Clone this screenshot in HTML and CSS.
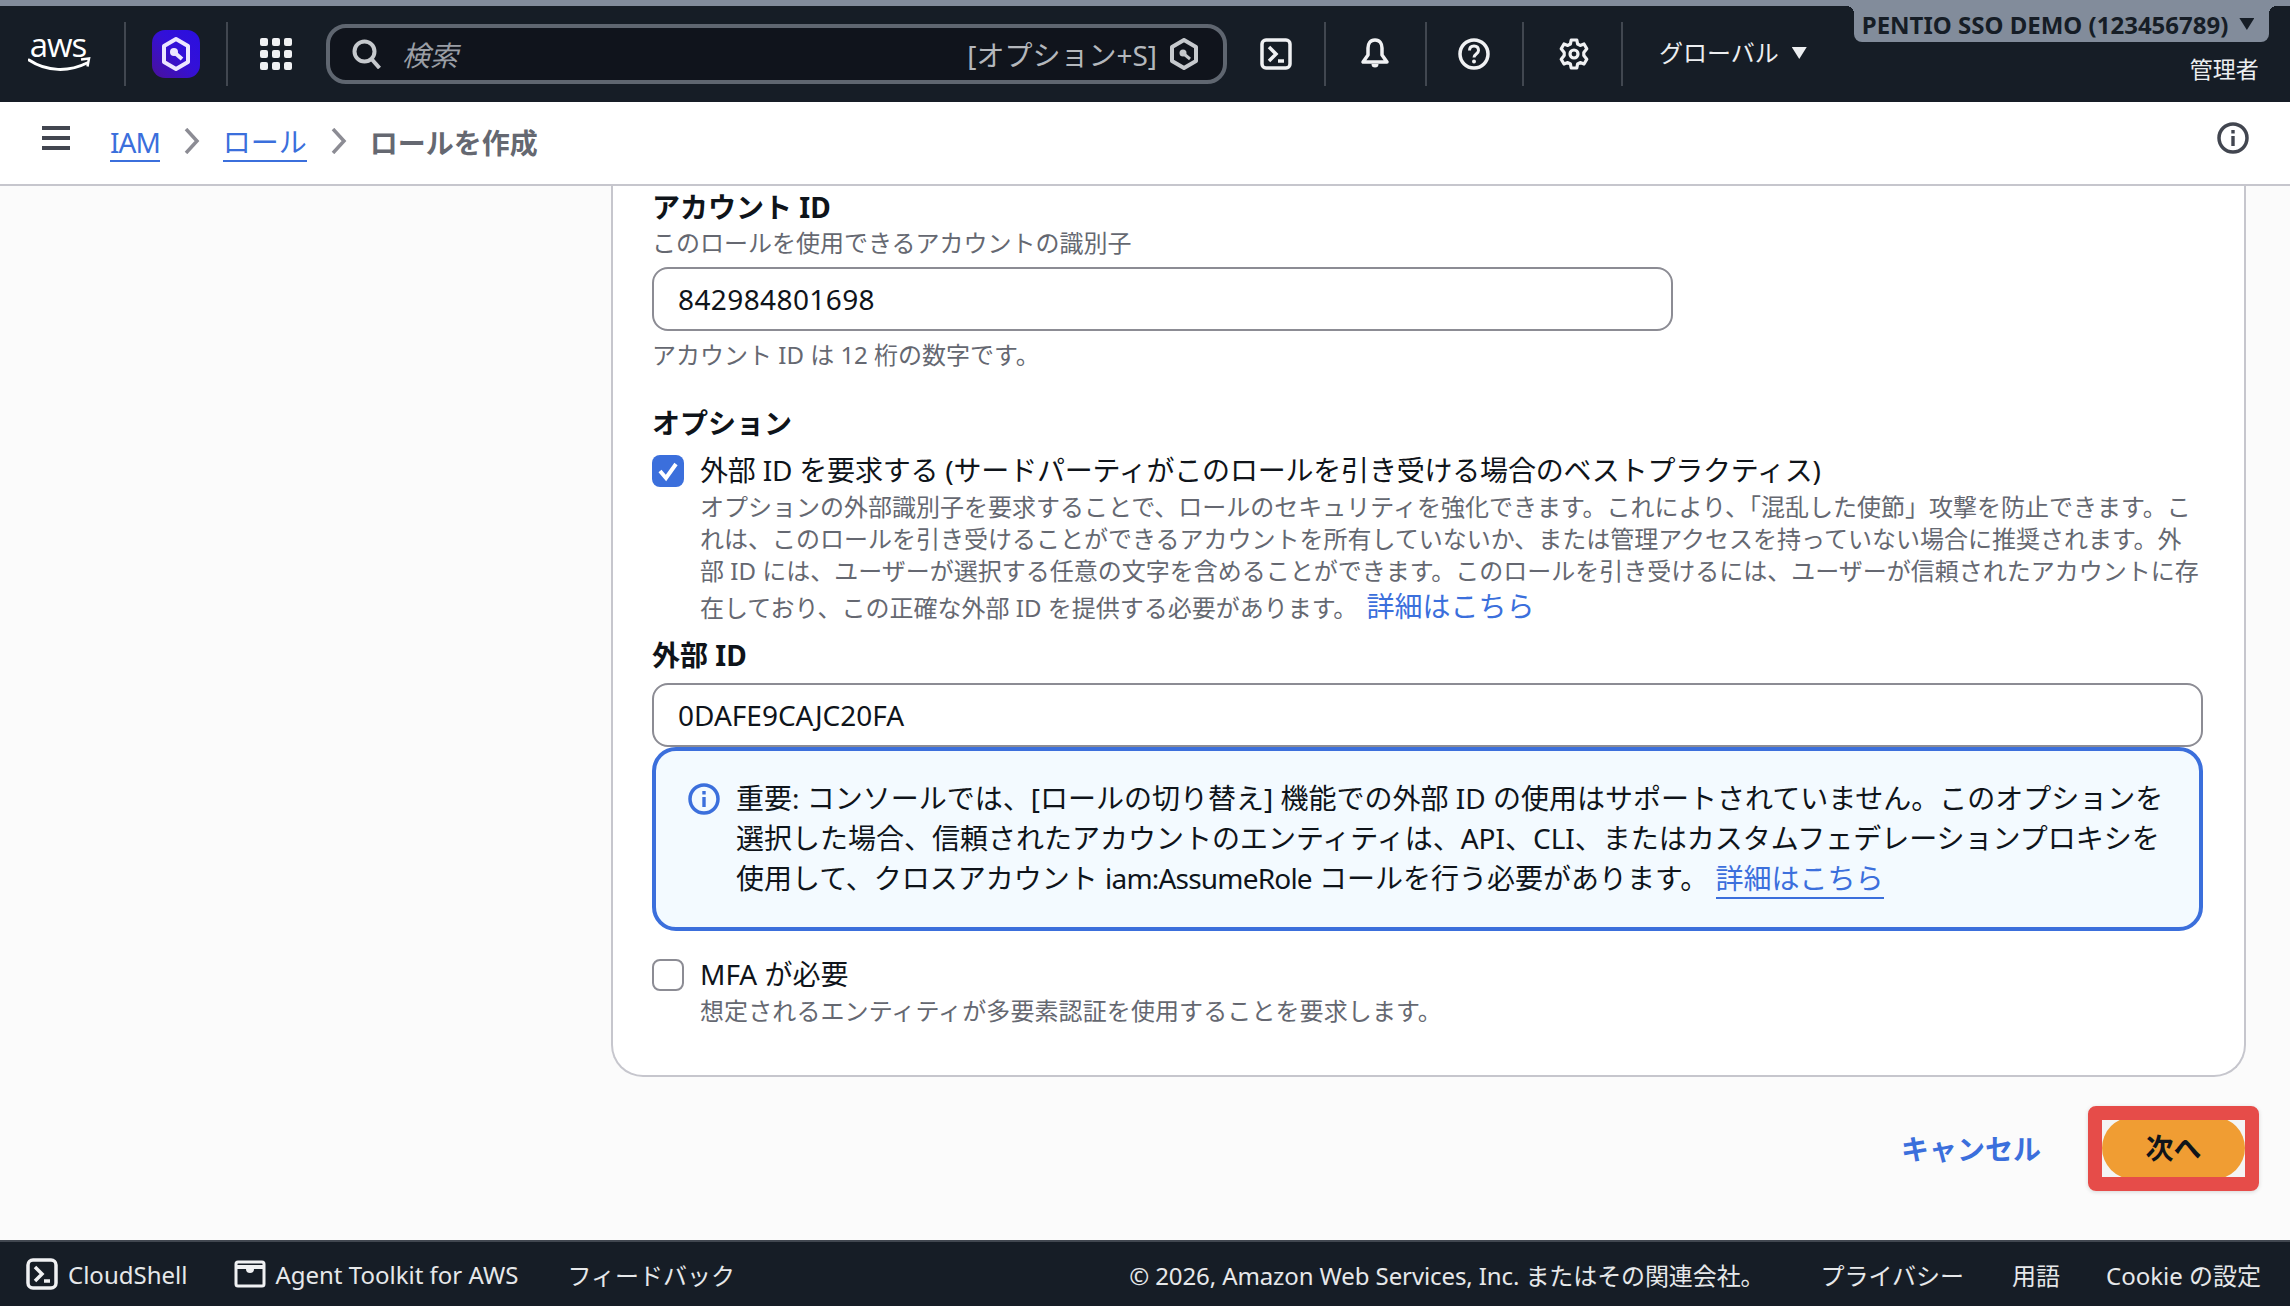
FILE: index.html
```html
<!DOCTYPE html>
<html lang="ja">
<head>
<meta charset="utf-8">
<title>ロールを作成</title>
<link rel="stylesheet" href="styles.css">
</head>
<body>
<div class="strip"></div>
<header class="topbar">
  <svg class="aws" viewBox="0 -12 63 50" width="63" height="50" aria-label="aws"><text x="30" y="22" text-anchor="middle" class="aws-text">aws</text><path d="M1 25c18 12 40 12 58 3" fill="none" stroke="#fff" stroke-width="3" stroke-linecap="round"/><path d="M53 24.500l8-1-1.500 8" fill="none" stroke="#fff" stroke-width="2.500"/></svg>
  <span class="divider d1"></span>
  <span class="applogo"><svg viewBox="0 0 48 48" width="48" height="48"><path d="M24 9l12 7v16l-12 7-12-7V16z" fill="none" stroke="#ece6ff" stroke-width="4" stroke-linejoin="round"/><circle cx="22" cy="22" r="4" fill="#ece6ff"/><path d="M23 23l7 6" stroke="#ece6ff" stroke-width="4"/></svg></span>
  <span class="divider d2"></span>
  <svg class="grid" viewBox="0 0 32 32" width="32" height="32"><g fill="#f0f1f3"><rect x="0" y="0" width="8" height="8" rx="2"/><rect x="12" y="0" width="8" height="8" rx="2"/><rect x="24" y="0" width="8" height="8" rx="2"/><rect x="0" y="12" width="8" height="8" rx="2"/><rect x="12" y="12" width="8" height="8" rx="2"/><rect x="24" y="12" width="8" height="8" rx="2"/><rect x="0" y="24" width="8" height="8" rx="2"/><rect x="12" y="24" width="8" height="8" rx="2"/><rect x="24" y="24" width="8" height="8" rx="2"/></g></svg>
  <div class="search">
    <svg viewBox="0 0 30 30" width="30" height="30"><circle cx="12.500" cy="12.500" r="10" fill="none" stroke="#c6c9cd" stroke-width="4"/><path d="M19.500 20l8 9" stroke="#c6c9cd" stroke-width="4"/></svg>
    <span class="search-ph">検索</span>
    <span class="search-key">[オプション+S]</span>
    <svg viewBox="0 0 30 32" width="30" height="32"><path d="M15 2l12 7v14l-12 7-12-7V9z" fill="none" stroke="#c6c9cd" stroke-width="4" stroke-linejoin="round"/><circle cx="14" cy="15" r="3.500" fill="#c6c9cd"/><path d="M15 16l6 5" stroke="#c6c9cd" stroke-width="3"/></svg>
  </div>
  <svg class="ico i-shell" viewBox="0 0 32 32" width="32" height="32"><rect x="2" y="2" width="28" height="28" rx="4" fill="none" stroke="#f0f1f3" stroke-width="3.500"/><path d="M9 9l7 7-7 7" fill="none" stroke="#f0f1f3" stroke-width="3.500"/><path d="M18 23h6" stroke="#f0f1f3" stroke-width="3.500"/></svg>
  <span class="divider d3"></span>
  <svg class="ico i-bell" viewBox="0 0 32 32" width="32" height="32"><path d="M16 2c-5 0-7 4-7 8v7l-5 7h24l-5-7v-7c0-4-2-8-7-8z" fill="none" stroke="#f0f1f3" stroke-width="3.500" stroke-linejoin="round"/><path d="M12.500 26a3.500 3.500 0 007 0z" fill="#f0f1f3"/></svg>
  <span class="divider d4"></span>
  <svg class="ico i-help" viewBox="0 0 32 32" width="32" height="32"><circle cx="16" cy="16" r="14" fill="none" stroke="#f0f1f3" stroke-width="3.500"/><path d="M11.500 12.500c0-3 2-4.500 4.500-4.500s4.500 1.500 4.500 4.500c0 3.500-4.500 3.500-4.500 7" fill="none" stroke="#f0f1f3" stroke-width="3"/><circle cx="16" cy="23.500" r="2" fill="#f0f1f3"/></svg>
  <span class="divider d5"></span>
  <svg class="ico i-gear" viewBox="0 0 16 16" width="32" height="32"><path d="M6.600 1H9.400L9.800 3 11.100 3.700 13 3 14.400 5.400 12.900 7.200V8.800L14.400 10.600 13 13 11.100 12.300 9.800 13 9.400 15H6.600L6.200 13 4.900 12.300 3 13 1.600 10.600 3.100 8.800V7.200L1.600 5.400 3 3 4.900 3.700 6.200 3z" fill="none" stroke="#f0f1f3" stroke-width="1.600" stroke-linejoin="round"/><circle cx="8" cy="8" r="2" fill="none" stroke="#f0f1f3" stroke-width="1.600"/></svg>
  <span class="divider d6"></span>
  <div class="region"><span>グローバル</span><i class="tri"></i></div>
  <div class="account">
    <div class="acct-tab"><span>PENTIO SSO DEMO (123456789)</span><i class="tri tri-dark"></i></div>
    <div class="acct-role">管理者</div>
  </div>
</header>
<nav class="crumbs">
  <div class="burger"><span></span><span></span><span></span></div>
  <a class="crumb-link crumb-iam" href="#">IAM</a>
  <svg class="chev" viewBox="0 0 16 26" width="16" height="26"><path d="M2 1l11 12L2 25" fill="none" stroke="#8c8c94" stroke-width="3.500"/></svg>
  <a class="crumb-link" href="#">ロール</a>
  <svg class="chev" viewBox="0 0 16 26" width="16" height="26"><path d="M2 1l11 12L2 25" fill="none" stroke="#8c8c94" stroke-width="3.500"/></svg>
  <span class="crumb-cur">ロールを作成</span>
  <svg class="crumb-info" viewBox="0 0 32 32" width="32" height="32"><circle cx="16" cy="16" r="14" fill="none" stroke="#424650" stroke-width="3.500"/><rect x="14.300" y="14" width="3.400" height="10" fill="#424650"/><rect x="14.300" y="8" width="3.400" height="3.500" fill="#424650"/></svg>
</nav>
<main class="main">
  <section class="card">
    <div class="label">アカウント ID</div>
    <div class="desc d-tight">このロールを使用できるアカウントの識別子</div>
    <div class="input i-acct">842984801698</div>
    <div class="desc d-hint">アカウント ID は 12 桁の数字です。</div>
    <div class="label l-opt">オプション</div>
    <div class="check-row cr-ext">
      <span class="check on"><svg viewBox="0 0 32 32" width="32" height="32"><path d="M8 16l6 7 10-14" fill="none" stroke="#fff" stroke-width="4"/></svg></span>
      <div class="check-body">
        <div class="check-label cl-tight">外部 ID を要求する (サードパーティがこのロールを引き受ける場合のベストプラクティス)</div>
        <div class="desc d-long">オプションの外部識別子を要求することで、ロールのセキュリティを強化できます。これにより、「混乱した使節」攻撃を防止できます。こ<br>れは、このロールを引き受けることができるアカウントを所有していないか、または管理アクセスを持っていない場合に推奨されます。外<br>部 ID には、ユーザーが選択する任意の文字を含めることができます。このロールを引き受けるには、ユーザーが信頼されたアカウントに存<br>在しており、この正確な外部 ID を提供する必要があります。 <a class="inline-link" href="#">詳細はこちら</a></div>
      </div>
    </div>
    <div class="label l-ext">外部 ID</div>
    <div class="input i-ext">0DAFE9CAJC20FA</div>
    <div class="alert">
      <svg class="alert-ico" viewBox="0 0 32 32" width="32" height="32"><circle cx="16" cy="16" r="14" fill="none" stroke="#3b6fdc" stroke-width="3.500"/><rect x="14.300" y="14" width="3.400" height="10" fill="#3b6fdc"/><rect x="14.300" y="8" width="3.400" height="3.500" fill="#3b6fdc"/></svg>
      <p class="alert-text">重要: コンソールでは、[ロールの切り替え] 機能での外部 ID の使用はサポートされていません。このオプションを<br>選択した場合、信頼されたアカウントのエンティティは、API、CLI、またはカスタムフェデレーションプロキシを<br>使用して、クロスアカウント <span class="iam">iam:AssumeRole</span> コールを行う必要があります。 <a class="alert-link" href="#">詳細はこちら</a></p>
    </div>
    <div class="check-row cr-mfa">
      <span class="check"></span>
      <div class="check-body">
        <div class="check-label">MFA が必要</div>
        <div class="desc d-mfa">想定されるエンティティが多要素認証を使用することを要求します。</div>
      </div>
    </div>
  </section>
  <div class="actions">
    <a class="cancel" href="#">キャンセル</a>
    <span class="highlight"><span class="hl-inner"><button class="next" type="button">次へ</button></span></span>
  </div>
</main>
<footer class="footer">
  <svg viewBox="0 0 32 32" width="32" height="32"><rect x="2" y="2" width="28" height="28" rx="5" fill="none" stroke="#f0f1f3" stroke-width="3.500"/><path d="M9 9l7 7-7 7" fill="none" stroke="#f0f1f3" stroke-width="3.500"/><path d="M18 23h6" stroke="#f0f1f3" stroke-width="3.500"/></svg>
  <span class="f-item f-shell">CloudShell</span>
  <svg class="f-toolkit" viewBox="0 0 32 28" width="32" height="28"><rect x="2" y="2" width="28" height="24" rx="2" fill="none" stroke="#f0f1f3" stroke-width="3"/><path d="M2 7h28" stroke="#f0f1f3" stroke-width="4"/><circle cx="16" cy="9" r="4" fill="#f0f1f3"/></svg>
  <span class="f-item f-agent">Agent Toolkit for AWS</span>
  <span class="f-item f-feedback">フィードバック</span>
  <span class="f-item f-copy">© 2026, Amazon Web Services, Inc. またはその関連会社。</span>
  <span class="f-item f-link1">プライバシー</span>
  <span class="f-item f-link2">用語</span>
  <span class="f-item f-link3">Cookie の設定</span>
</footer>
</body>
</html>
```
FILE: styles.css
```css
* { box-sizing: border-box; }
html, body { margin: 0; height: 100%; }
body {
  display: flex;
  flex-direction: column;
  height: 1306px;
  overflow: hidden;
  background: #fbfbfb;
  color: #0f141a;
  font-family: "Noto Sans", "Noto Sans CJK JP", sans-serif;
}
a { text-decoration: none; color: #3b6fdc; }
svg { display: block; flex: none; }

.strip { height: 6px; background: #828c9b; flex: none; }

/* top bar */
.topbar {
  height: 96px;
  flex: none;
  display: flex;
  align-items: center;
  padding-left: 28px;
  background: #161d26;
  color: #eceef0;
}
.aws { margin-top: -12px; }
.aws-text { font: 500 33px "Open Sans", sans-serif; fill: #fff; letter-spacing: -1px; }
.divider { width: 2px; height: 64px; background: #414750; flex: none; }
.d1 { margin-left: 33px; }
.applogo {
  width: 48px; height: 48px; margin-left: 26px; border-radius: 13px; flex: none;
  background: linear-gradient(45deg, #4a119a 0%, #3310d8 55%, #2a0fe0 100%);
}
.d2 { margin-left: 26px; }
.grid { margin-left: 32px; }
.search {
  width: 901px; height: 60px; margin-left: 34px; padding: 0 24px 0 22px; flex: none;
  display: flex; align-items: center;
  background: #10141c; border: 4px solid #5f6670; border-radius: 20px;
}
.search-ph { margin-left: 20px; font-size: 28px; font-style: italic; color: #9a9ea5; }
.search-key { margin-left: auto; margin-right: 12px; font-size: 28px; color: #b4b7bc; }
.i-shell { margin-left: 33px; }
.d3 { margin-left: 32px; }
.i-bell { margin-left: 33px; }
.d4 { margin-left: 34px; }
.i-help { margin-left: 31px; }
.d5 { margin-left: 32px; }
.i-gear { margin-left: 34px; }
.d6 { margin-left: 31px; }
.region { margin-left: 36px; display: flex; align-items: center; font-size: 24px; line-height: 32px; margin-top: -2px; }
.tri {
  display: block; width: 15px; height: 12px; margin-left: 15px;
  background: #eceef0; clip-path: polygon(0 0, 100% 0, 50% 100%);
}
.region .tri { margin-left: 13px; }
.tri-dark { background: #161d26; margin-left: 11px; }
.account { margin-left: 47px; width: 415px; height: 96px; flex: none; display: flex; flex-direction: column; align-self: flex-start; }
.acct-tab {
  position: relative;
  height: 36px; display: flex; align-items: center; padding-left: 8px;
  background: #828c9b; color: #161d26; font-size: 24px; font-weight: 700;
  border-radius: 0 0 8px 8px;
}
.acct-tab::before, .acct-tab::after { content: ""; position: absolute; top: 0; width: 8px; height: 8px; }
.acct-tab::before { left: -8px; background: radial-gradient(circle at 0 100%, transparent 8px, #828c9b 8px); }
.acct-tab::after { right: -8px; background: radial-gradient(circle at 100% 100%, transparent 8px, #828c9b 8px); }
.acct-role { margin-top: 11px; padding-right: 10px; text-align: right; font-size: 23px; line-height: 32px; }

/* breadcrumb */
.crumbs {
  height: 84px; flex: none;
  display: flex; align-items: center;
  padding: 0 41px 2px 42px;
  background: #fff;
  border-bottom: 2px solid #c6c6cd;
  font-size: 28px;
}
.burger { width: 28px; height: 24px; margin-bottom: 8px; display: flex; flex-direction: column; justify-content: space-between; }
.burger span { height: 4px; background: #424650; display: block; }
.crumb-link { line-height: 36px; border-bottom: 2px solid #3b6fdc; margin-top: 2px; }
.crumb-iam { letter-spacing: -1px; margin-left: 40px; }
.chev { margin: 0 23px 2px 24px; }
.crumb-cur { font-weight: 700; color: #656871; }
.crumb-info { margin-left: auto; margin-bottom: 8px; }

/* main */
.main { flex: 1; min-height: 0; overflow: hidden; padding: 0 31px 0 611px; }
.card {
  margin-right: 13px; padding: 3px 41px 48px 39px;
  background: #fff;
  border: 2px solid #c6c6cd; border-top: 0;
  border-radius: 0 0 32px 32px;
}
.label { font-size: 28px; font-weight: 700; line-height: 36px; }
.l-opt { margin-top: 34px; }
.l-ext { margin-top: 12px; }
.desc { font-size: 24px; line-height: 32px; color: #656871; }
.d-tight { margin-top: 2px; }
.d-hint { margin-top: 8px; }
.d-long { margin-top: 3px; white-space: nowrap; }
.d-mfa { margin-top: 3px; letter-spacing: .1px; }
.input {
  height: 64px; padding: 0 24px; display: flex; align-items: center;
  border: 2px solid #8c8c94; border-radius: 16px; background: #fff;
  font-size: 28px;
}
.i-acct { width: 1021px; margin-top: 8px; letter-spacing: .4px; }
.i-ext { margin-top: 10px; }
.check-row { display: flex; gap: 16px; }
.cr-ext { margin-top: 11px; }
.cr-mfa { margin-top: 25px; }
.check { width: 32px; height: 32px; margin-top: 3px; flex: none; border-radius: 8px; border: 2px solid #8c8c94; background: #fff; }
.check.on { border: 0; background: #3b6fdc; }
.check-label { font-size: 28px; line-height: 36px; }
.cl-tight { letter-spacing: -.2px; }
.inline-link { font-size: 28px; line-height: 38px; margin-left: 3px; }
.alert {
  height: 184px; padding: 27px 32px 0 32px;
  display: flex; gap: 16px;
  background: #f3faff; border: 4px solid #3b6fdc; border-radius: 24px;
}
.alert-ico { margin-top: 5px; }
.alert-text { margin: 0; font-size: 28px; line-height: 40px; white-space: nowrap; color: #0f141a; }
.iam { letter-spacing: -.8px; }
.alert-link { border-bottom: 2px solid #3b6fdc; }
.actions { margin-top: 29px; display: flex; justify-content: flex-end; align-items: center; gap: 47px; }
.cancel { font-size: 28px; font-weight: 700; margin-bottom: 2px; }
.highlight {
  display: block; border: 14px solid #e64c49; border-radius: 8px;
  box-shadow: 0 1px 4px rgba(0,0,0,.15);
}
.hl-inner { display: block; width: 143px; height: 57px; overflow: hidden; background: #f4f4f4; }
.next {
  display: block; width: 143px; height: 62px; margin: -3px 0 0; padding: 0 0 2px;
  border: 0; border-radius: 31px; background: #f09d33; color: #0f141a;
  font: 700 28px "Noto Sans", "Noto Sans CJK JP", sans-serif;
}

/* footer */
.footer {
  height: 66px; flex: none;
  display: flex; align-items: center;
  padding: 0 29px 0 26px;
  background: #161d26;
  border-top: 2px solid #414750;
  color: #e6e8ea;
  font-size: 24px;
}
.f-item { white-space: nowrap; }
.f-shell { margin-left: 10px; }
.f-toolkit { margin-left: 47px; }
.f-agent { margin-left: 9px; }
.f-feedback { margin-left: 49px; }
.f-copy { margin-left: auto; margin-right: 56px; letter-spacing: -.1px; }
.f-link2 { margin-left: 48px; }
.f-link3 { margin-left: 46px; }
```
